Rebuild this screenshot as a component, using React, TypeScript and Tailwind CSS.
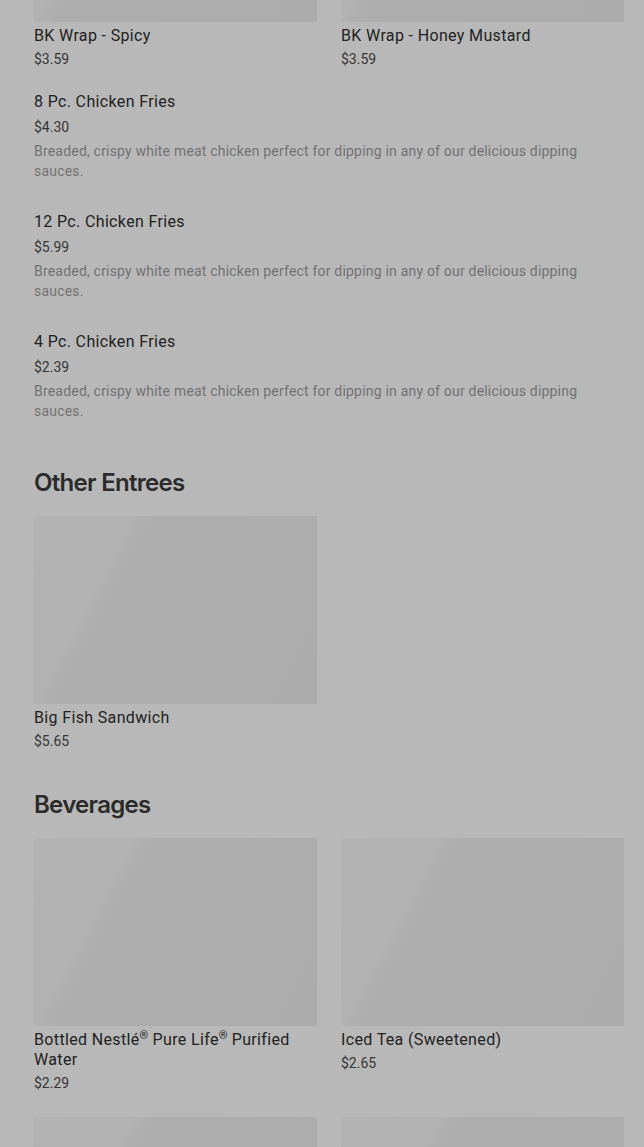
import React from "react";

const font = { fontFamily: "Roboto, 'Noto Sans', sans-serif" };

function Skeleton({ className = "" }: { className?: string }) {
  return (
    <div
      className={`h-[188px] w-full bg-[linear-gradient(118deg,#b3b3b3_0%,#b2b2b2_26%,#adadad_32%,#acacac_100%)] ${className}`}
    />
  );
}

function Card({ name, price, img = true }: { name: React.ReactNode; price: string; img?: boolean }) {
  return (
    <div className="flex flex-col">
      {img && <Skeleton />}
      <div className="mt-[4px] text-[16px] leading-5 font-normal tracking-[0.35px] text-[#222222]">{name}</div>
      <div className="mt-[3px] text-[14px] leading-5 text-[#363636]">{price}</div>
    </div>
  );
}

function ListItem({ name, price, desc }: { name: string; price: string; desc: string }) {
  return (
    <div className="flex flex-col">
      <div className="text-[16px] leading-5 font-normal tracking-[0.35px] text-[#222222]">{name}</div>
      <div className="mt-[5px] text-[14px] leading-5 text-[#363636]">{price}</div>
      <div className="mt-[4px] text-[14px] leading-5 tracking-[0.2px] text-[#727272] pr-[40px]">{desc}</div>
    </div>
  );
}

const DESC =
  "Breaded, crispy white meat chicken perfect for dipping in any of our delicious dipping sauces.";

const headingFont = { fontFamily: "Inter, Roboto, sans-serif" };

const Reg = () => <span className="text-[11px] leading-none align-text-top tracking-normal">®</span>;

export default function App() {
  return (
    <div className="min-h-[1147px] w-full bg-[#b8b8b8] overflow-hidden" style={font}>
      <div className="pl-[34px] pr-[20px] mt-[-166px]">
        <div className="grid grid-cols-2 gap-x-[24px]">
          <Card name="BK Wrap - Spicy" price="$3.59" />
          <Card name="BK Wrap - Honey Mustard" price="$3.59" />
        </div>

        <div className="mt-[23px] flex flex-col gap-[31px]">
          <ListItem name="8 Pc. Chicken Fries" price="$4.30" desc={DESC} />
          <ListItem name="12 Pc. Chicken Fries" price="$5.99" desc={DESC} />
          <ListItem name="4 Pc. Chicken Fries" price="$2.39" desc={DESC} />
        </div>

        <h2
          className="mt-[46px] text-[24px] leading-8 font-semibold tracking-[-0.7px] text-[#2b2b2b]"
          style={headingFont}
        >
          Other Entrees
        </h2>
        <div className="mt-[17px] grid grid-cols-2 gap-x-[24px]">
          <Card name="Big Fish Sandwich" price="$5.65" />
        </div>

        <h2
          className="mt-[38px] text-[24px] leading-8 font-semibold tracking-[-0.7px] text-[#2b2b2b]"
          style={headingFont}
        >
          Beverages
        </h2>
        <div className="mt-[17px] grid grid-cols-2 gap-x-[24px] gap-y-[24px]">
          <Card
            name={
              <>
                Bottled Nestlé<Reg /> Pure Life<Reg /> Purified Water
              </>
            }
            price="$2.29"
          />
          <Card name="Iced Tea (Sweetened)" price="$2.65" />
          <Card name="" price="" />
          <Card name="" price="" />
        </div>
      </div>
    </div>
  );
}
